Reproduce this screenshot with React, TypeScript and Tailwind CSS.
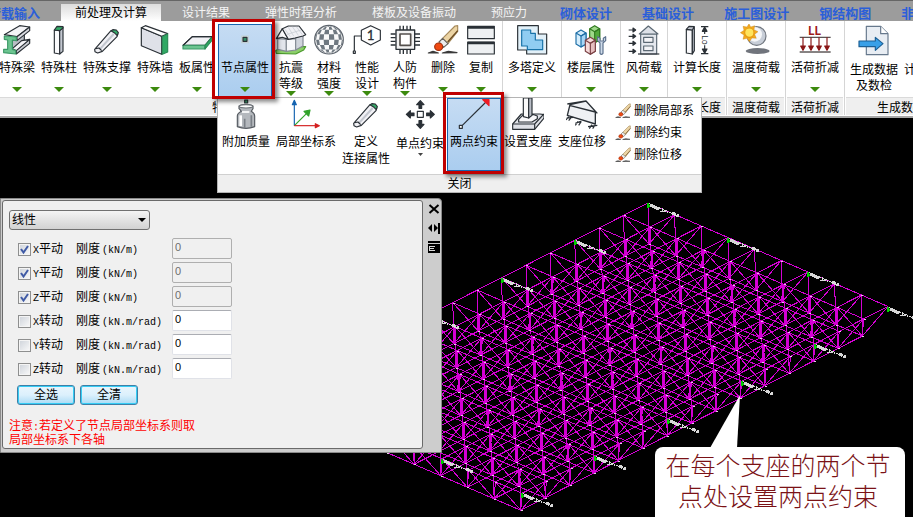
import { useState, type ComponentType, type ReactNode } from "react";

const MAGENTA = "#d400d4";
const INK = "#2a3036";

type IconProps = { className?: string };

function Icon({ children, className = "h-8 w-8" }: IconProps & { children: ReactNode }) {
  return (
    <svg
      viewBox="0 0 96 96"
      className={`shrink-0 ${className}`}
      fill="none"
      stroke={INK}
      strokeWidth="3.5"
      strokeLinejoin="round"
      aria-hidden="true"
    >
      {children}
    </svg>
  );
}

const BeamIcon = () => (
  <Icon>
    <path d="M34 50 70 26V48L34 76Z" fill="#b9bdc4" />
    <path d="M46 78 86 46V58L46 90Z" fill="#c9ccd2" />
    <path d="M34 74 62 50 86 46 46 80Z" fill="#f4f4f7" />
    <path d="M10 32 56 5 86 9 48 38Z" fill="#f4f4f7" />
    <path d="M48 38 86 9V20L48 50Z" fill="#dadce2" />
    <path d="M10 36 46 39V50L34 48V76L44 79V90L8 86V76L20 76V48L10 46Z" fill="#6cc490" stroke="#3d9a68" />
  </Icon>
);

const ColumnIcon = () => (
  <Icon>
    <path d="M34 18 50 20V90L34 87Z" fill="#fafafc" />
    <path d="M50 20 60 10V82L50 90Z" fill="#c3c7d0" />
    <path d="M34 18 42 7 60 8V12L50 20Z" fill="#35ad68" />
  </Icon>
);

const BraceIcon = () => (
  <Icon>
    <path d="M11 76 58 22 66 18 80 30 78 38 34 82 20 87 12 83Z" fill="#f1f1f5" />
    <path d="M26 76 68 30" stroke="#c3c7cf" strokeWidth="6" />
    <path d="M60 20 66 17 76 18 82 26 79 35 72 28Z" fill="#35ad68" />
    <path d="M14 74 24 72 32 80" />
  </Icon>
);

const WallIcon = () => (
  <Icon>
    <path d="M7 11 68 37V91L7 65Z" fill="#dfe1e8" />
    <path d="M7 11 19 5 86 29 68 37Z" fill="#fff" />
    <path d="M70 38 86 30V84L70 91Z" fill="#2fa863" stroke="#2a8a55" />
  </Icon>
);

const SlabIcon = () => (
  <Icon>
    <path d="M6 64 34 38H94L72 64Z" fill="#f1f1f5" />
    <path d="M6 64H72V75H6Z" fill="#6cc490" stroke="#3d9a68" />
    <path d="M72 64 94 38V48L72 75Z" fill="#2fa863" stroke="#2a8a55" />
    <path d="M6 64 34 38H94" />
  </Icon>
);

const NodeIcon = () => (
  <Icon>
    <rect x="38" y="36" width="20" height="20" fill="#e8f1ee" stroke="#c2d0d6" />
    <rect x="42" y="40" width="12" height="12" fill="#37906a" />
  </Icon>
);

const HouseIcon = () => (
  <Icon>
    <path d="M2 80 20 68H92L86 78 62 90 4 88Z" fill="#8ccf6a" stroke="#4b9a2c" />
    <path d="M8 44V76L34 82V46Z" fill="#e3e5ec" stroke="#858b95" />
    <path d="M34 46V82L62 78V44Z" fill="#f8f8fb" stroke="#858b95" />
    <path d="M62 42V78L84 66V32Z" fill="#d0d4dc" stroke="#858b95" />
    <path d="M4 44 22 14 40 46 22 40Z" fill="#fafafc" />
    <path d="M22 14 40 6H72L92 32 84 36 60 42 40 46Z" fill="#f1f1f5" />
    <path d="M30 16 46 38M40 10 56 36M52 8 70 34M64 8 82 32M34 32 78 18" stroke="#c3c8d0" strokeWidth="2" />
  </Icon>
);

// alternate cells of a latitude / longitude grid, seen from the side
const sphereCells = (() => {
  const n = 8;
  const cells: string[] = [];
  const at = (a: number, b: number) => {
    const lat = -Math.PI / 2 + (a * Math.PI) / n;
    const lon = -Math.PI / 2 + (b * Math.PI) / n;
    return `${(48 + 42 * Math.cos(lat) * Math.sin(lon)).toFixed(1)},${(47 + 42 * Math.sin(lat)).toFixed(1)}`;
  };
  for (let a = 0; a < n; a++)
    for (let b = 0; b < n; b++)
      if ((a + b) % 2) cells.push([at(a, b), at(a, b + 1), at(a + 1, b + 1), at(a + 1, b)].join(" "));
  return cells;
})();

const SphereIcon = () => (
  <Icon>
    <circle cx="48" cy="47" r="43" fill="#fafafa" stroke="#5d646c" />
    {sphereCells.map((c) => (
      <polygon key={c} points={c} fill="#6f7880" stroke="none" />
    ))}
  </Icon>
);

const HexIcon = () => (
  <Icon>
    <path d="M10 81V36H31" />
    <rect x="7" y="81" width="6" height="7" fill="#fff" />
    <path d="M59 5 88 19V48L59 63 31 48V19Z" fill="#fff" />
    <text x="59" y="48" textAnchor="middle" fontSize="40" fontFamily="Lato, sans-serif" fill={INK} stroke={INK} strokeWidth="1">
      1
    </text>
  </Icon>
);

const ChipIcon = () => (
  <Icon>
    <path d="M33 5V18M43 5V18M54 5V18M64 5V18M33 76V90M43 76V90M54 76V90M64 76V90M5 30H20M5 41H20M5 52H20M5 63H20M78 30H93M78 41H93M78 52H93M78 63H93" strokeWidth="4" />
    <rect x="21" y="18" width="56" height="58" fill="#f3f3f3" strokeWidth="4" />
    <rect x="33" y="30" width="32" height="34" fill="#fff" stroke="#54504d" strokeWidth="5" />
  </Icon>
);

const BrushIcon = ({ className }: IconProps) => (
  <Icon className={className}>
    <path d="M4 87 18 82 34 87Z M46 87 64 82 90 86Z" fill="#3a3a3a" stroke="#3a3a3a" />
    <path d="M46 44 84 6 92 5V22L62 60Z" fill="#ecd4a4" stroke="#a68a5c" />
    <path d="M62 54 92 20" stroke="#6a4a20" strokeWidth="4" />
    <path d="M36 54 47 43 63 59 50 70Z" fill="#ececec" stroke="#66625c" />
    <ellipse cx="35" cy="68" rx="12" ry="11" fill="#f04a12" stroke="#a5300c" />
  </Icon>
);

const CopyIcon = () => (
  <Icon>
    <rect x="8" y="7" width="80" height="37" fill="#eef0f2" />
    <rect x="8" y="54" width="80" height="36" fill="#eef0f2" />
    <path d="M8 10H88M8 57H88" strokeWidth="8" />
  </Icon>
);

const TowerIcon = () => (
  <Icon>
    <path d="M5 5H67V30H92V90H32V78H5Z" fill="#e2f0f8" />
    <path d="M17 18H44V28H58V48H80V77H34V66H17Z" fill="#90cdf2" stroke="#1772a8" />
  </Icon>
);

function Prism({ x, y, light, dark, edge }: { x: number; y: number; light: string; dark: string; edge: string }) {
  return (
    <g transform={`translate(${x} ${y})`} stroke={edge}>
      <path d="M0 9 15 0 30 9V42L15 51 0 42Z" fill={light} />
      <path d="M15 18 30 9V42L15 51Z" fill={dark} />
      <path d="M0 9 15 18 30 9" />
    </g>
  );
}

const FloorsIcon = () => (
  <Icon>
    <Prism x={44} y={5} light="#9fd98a" dark="#52a83b" edge="#2f7a1f" />
    <Prism x={3} y={18} light="#d5edfc" dark="#a5d5f6" edge="#1d6ea6" />
    <Prism x={31} y={40} light="#f5dada" dark="#e6bfc0" edge="#7a4145" />
    <path d="M68 38V50L75 57V88Q79 94 84 88V57L92 50V38L85 43V51H75V43Z" fill="#cfdbea" stroke="#5a6f8b" />
  </Icon>
);

const WindIcon = () => (
  <Icon>
    {[18, 37, 58, 82].map((y) => (
      <path key={y} d={`M2 ${y}H18M15 ${y - 6} 23 ${y} 15 ${y + 6}Z`} fill={INK} />
    ))}
    <path d="M38 30H86V90H38Z" fill="#e5e8ee" stroke="#5b6873" />
    <path d="M34 30 61 6 90 30Z" fill="#dde1e8" stroke="#5b6873" />
    <path d="M47 40H75V55H47ZM47 66H75V80H47Z" fill="#f4f4f7" stroke="#5b6873" />
    <path d="M30 90H94" />
  </Icon>
);

const LengthIcon = () => (
  <Icon>
    <path d="M16 16 34 18V90L16 87Z" fill="#fafafc" />
    <path d="M16 16 24 7 40 8 34 18ZM34 18 40 8V80L34 90Z" fill="#c3c7d0" />
    <path d="M60 8H82M60 89H82M71 12V30M71 64V86" />
    <path d="M71 9 78 22H64ZM71 88 78 75H64Z" fill={INK} />
    <text transform="translate(64 34) rotate(90)" fontSize="24" fontFamily="Inter, sans-serif" fill={INK} stroke="none">
      Lo
    </text>
  </Icon>
);

const TempIcon = () => (
  <Icon>
    <ellipse cx="53" cy="81" rx="36" ry="9" fill="#70747c" stroke="none" />
    <circle cx="50" cy="36" r="28" fill="#c8ced8" stroke="#70767f" />
    <circle cx="44" cy="31" r="22" fill="#f5f6f8" stroke="none" />
    <path d="M27 -1 32 9 44 5 42 17 54 23 44 31 49 43 36 42 28 53 21 43 9 46 12 33 1 26 12 19 9 7 21 9Z" fill="#f4a91f" stroke="#b7780c" strokeWidth="1" />
    <circle cx="28" cy="26" r="14" fill="#ffe45c" stroke="#e59a12" />
  </Icon>
);

const LiveLoadIcon = () => (
  <Icon>
    <text x="47" y="33" textAnchor="middle" fontSize="34" fontWeight="bold" fontFamily="Inter, sans-serif" fill="#9e1b1b" stroke="none">
      LL
    </text>
    <path d="M2 40H95" stroke="#4b4444" />
    {[12, 36, 60, 84].map((x) => (
      <path key={x} d={`M${x} 40V68M${x - 7} 66 ${x} 79 ${x + 7} 66Z`} fill="#8a1717" stroke="#8a1717" />
    ))}
    <path d="M2 84H95" stroke="#4b4444" strokeWidth="4" />
  </Icon>
);

const DataIcon = () => (
  <Icon>
    <path d="M25 7H68L90 29V92H25Z" fill="#e8edf3" stroke="#66788c" />
    <path d="M68 7V29H90" fill="#fff" stroke="#66788c" />
    <path d="M3 51H52V40L75 59 52 79V68H3Z" fill="#39a0e8" stroke="#1c5f94" />
  </Icon>
);

const WeightIcon = () => (
  <Icon>
    <rect x="44" y="6" width="9" height="9" fill="#3aa06c" />
    <path d="M27 24Q48 16 69 24V32Q66 36 64 40Q74 46 74 54V86Q48 96 22 86V54Q22 46 34 40Q31 36 27 32Z" fill="#b4b8bd" stroke="#565b61" />
    <path d="M32 52V84" stroke="#fff" strokeWidth="8" />
    <path d="M44 62V90M64 52V86" stroke="#7b8087" strokeWidth="5" />
    <ellipse cx="48" cy="25" rx="20" ry="5" fill="#fff" stroke="#71767c" />
    <path d="M36 42H58" stroke="#fff" strokeWidth="5" />
  </Icon>
);

const AxesIcon = () => (
  <Icon>
    <path d="M13 83V14" stroke="#1463b0" />
    <path d="M13 7 19 20H7Z" fill="#1463b0" stroke="#1463b0" />
    <path d="M13 83 50 46" stroke="#31a329" />
    <path d="M60 36 56 54 42 40Z" fill="#31a329" stroke="#31a329" />
    <path d="M13 83H78" stroke="#d42020" />
    <path d="M88 83 76 89V77Z" fill="#d42020" stroke="#d42020" />
  </Icon>
);

const SinglePointIcon = () => (
  <Icon>
    <rect x="40" y="40" width="18" height="18" fill="#fff" />
    <path
      d="M49 8 60 20H53V31H45V20H38ZM49 91 60 79H53V68H45V79H38ZM7 49 19 38V45H30V53H19V60ZM91 49 79 38V45H68V53H79V60Z"
      fill={INK}
    />
  </Icon>
);

const TwoPointIcon = () => (
  <Icon>
    <path d="M10 85 84 12" />
    <path d="M74 5H93V23Z" fill="#ee1c24" stroke="#ee1c24" />
    <rect x="4" y="82" width="9" height="9" fill="#fff" />
  </Icon>
);

const FootingIcon = () => (
  <Icon>
    <path d="M2 78 28 48H84L96 50V60L68 94H2Z" fill="#dfe1e7" />
    <path d="M2 78H68L96 48M68 78V94" />
    <path d="M20 64 34 50H66L76 54V62L60 72H20Z" fill="#f8f8fa" />
    <path d="M34 0V56L50 60V0Z" fill="#fafafa" />
    <path d="M50 0V60L60 52V0Z" fill="#b9bdc6" />
  </Icon>
);

const DisplaceIcon = () => (
  <Icon>
    <path d="M9 20 58 9 92 46 86 76 4 54Z" fill="#eff1f4" stroke="none" />
    <path d="M12 20 60 9 88 40V78L4 52 12 20M4 18 60 9 94 46M10 22 88 42" strokeWidth="4" />
    <path d="M2 60 22 58M0 66 8 56M8 68 16 58M28 76 44 70M28 82 36 70M38 82 46 70M66 86 94 82M70 92 78 80M80 92 88 80" />
  </Icon>
);

function Arrow() {
  return (
    <svg viewBox="0 0 10 5" className="block h-[5px] w-2.5" aria-hidden="true">
      <path d="M0 0H10L5 5Z" fill="#3c8a0e" />
    </svg>
  );
}

type Tool = {
  lines: string[];
  icon: ComponentType<IconProps>;
  wide?: boolean;
  narrow?: boolean;
  noArrow?: boolean;
};

function ToolButton({ tool }: { tool: Tool }) {
  const Glyph = tool.icon;
  const width = tool.wide ? "w-[54px]" : tool.narrow ? "w-[38px]" : "w-[42px]";
  const double = tool.lines.length > 1;
  return (
    <button
      type="button"
      className={`flex h-[76px] shrink-0 flex-col items-center pt-[3px] ${width} ${double ? "" : "pb-[5px]"}`}
    >
      <Glyph />
      <span className={`mt-1 whitespace-nowrap ${tool.noArrow ? "pt-0.5" : ""}`}>
        {tool.lines.map((l) => (
          <span key={l} className="block">
            {l}
          </span>
        ))}
      </span>
      {!tool.noArrow && (
        <span className={double ? "-mt-px" : "mt-auto"}>
          <Arrow />
        </span>
      )}
    </button>
  );
}

function Group({ label, children }: { label: string; children: ReactNode }) {
  return (
    <div className="shrink-0 border-r border-[#d5d5d5]">
      <div className="flex px-0.5">{children}</div>
      <div className="mx-px h-[18px] border-t border-[#dadada] bg-[#efefef] text-center leading-[20px]">{label}</div>
    </div>
  );
}

const beforeNode: Tool[] = [
  { lines: ["特殊梁"], icon: BeamIcon },
  { lines: ["特殊柱"], icon: ColumnIcon },
  { lines: ["特殊支撑"], icon: BraceIcon, wide: true },
  { lines: ["特殊墙"], icon: WallIcon },
  { lines: ["板属性"], icon: SlabIcon },
];

const afterNode: Tool[] = [
  { lines: ["抗震", "等级"], icon: HouseIcon, narrow: true },
  { lines: ["材料", "强度"], icon: SphereIcon, narrow: true },
  { lines: ["性能", "设计"], icon: HexIcon, narrow: true },
  { lines: ["人防", "构件"], icon: ChipIcon, narrow: true },
  { lines: ["删除"], icon: BrushIcon, narrow: true },
  { lines: ["复制"], icon: CopyIcon, narrow: true },
];

const singles: Tool[] = [
  { lines: ["多塔定义"], icon: TowerIcon, wide: true },
  { lines: ["楼层属性"], icon: FloorsIcon, wide: true },
  { lines: ["风荷载"], icon: WindIcon },
  { lines: ["计算长度"], icon: LengthIcon, wide: true },
  { lines: ["温度荷载"], icon: TempIcon, wide: true },
  { lines: ["活荷折减"], icon: LiveLoadIcon, wide: true },
];

const nodeTools: { lines: string[]; icon: ComponentType<IconProps>; width: string; more?: boolean; active?: boolean }[] = [
  { lines: ["附加质量"], icon: WeightIcon, width: "w-[54px]" },
  { lines: ["局部坐标系"], icon: AxesIcon, width: "w-[66px]" },
  { lines: ["定义", "连接属性"], icon: BraceIcon, width: "w-[54px]" },
  { lines: ["单点约束"], icon: SinglePointIcon, width: "w-[54px]", more: true },
  { lines: ["两点约束"], icon: TwoPointIcon, width: "w-[54px]", active: true },
  { lines: ["设置支座"], icon: FootingIcon, width: "w-[54px]" },
  { lines: ["支座位移"], icon: DisplaceIcon, width: "w-[54px]" },
];

function NodeMenu() {
  return (
    <div className="absolute -left-px top-[76px] z-20 w-[485px] border border-[#b4b4b4] bg-white">
      <div className="flex h-[76px] pl-px">
        {nodeTools.map(({ icon: Glyph, ...t }) => (
          <div key={t.lines[0]} className={`relative shrink-0 ${t.width}`}>
            <button
              type="button"
              className={`flex w-full flex-col items-center whitespace-nowrap leading-[17px] ${
                t.active ? "h-[73px] bg-gradient-to-b from-[#c6dcf3] to-[#aacdef] outline -outline-offset-1 outline-[#1763ae]" : ""
              }`}
            >
              <Glyph />
              <span className={t.more ? "mt-1.5" : "mt-1"}>
                {t.lines.map((l) => (
                  <span key={l} className="block">
                    {l}
                  </span>
                ))}
              </span>
              {t.more && (
                <svg viewBox="0 0 5 3" className="h-[3px] w-[5px]" aria-hidden="true">
                  <path d="M0 0H5L2.5 3Z" fill="#444" />
                </svg>
              )}
            </button>
            {t.active && (
              <span className="pointer-events-none absolute -left-1 -right-[3px] -top-1.5 bottom-0 z-30 border-[3px] border-[#c00000] shadow-[3px_3px_4px_rgba(0,0,0,0.45)]" />
            )}
          </div>
        ))}
        <div className="ml-1.5 pt-0.5">
          {["删除局部系", "删除约束", "删除位移"].map((l) => (
            <button key={l} type="button" className="flex h-[22px] items-center gap-[3px] whitespace-nowrap">
              <BrushIcon className="h-4 w-4" />
              {l}
            </button>
          ))}
        </div>
      </div>
      <div className="h-[18px] border-t border-[#d0d0d0] bg-[#efefef] text-center leading-[18px]">关闭</div>
    </div>
  );
}

const leftTabs = ["荷载输入", "前处理及计算", "设计结果", "弹性时程分析", "楼板及设备振动", "预应力"];
const rightTabs = ["砌体设计", "基础设计", "施工图设计", "钢结构图", "非线性"];

function Tabs() {
  return (
    <nav className="-ml-[26px] flex h-[21px] items-end gap-[5px] text-[12px] leading-[17px]">
      <div className="flex shrink-0 gap-[7px]">
        {leftTabs.map((t, i) => (
          <a
            key={t}
            href="#"
            className={`h-[17px] whitespace-nowrap px-3.5 pt-px ${
              i === 0
                ? "text-[13px] font-bold text-[#2b5fd9]"
                : i === 1
                  ? "bg-gradient-to-b from-[#dcdcdc] to-white text-black"
                  : "text-[#f4f4f4]"
            }`}
          >
            {t}
          </a>
        ))}
      </div>
      <div className="flex shrink-0 gap-0.5">
        {rightTabs.map((t) => (
          <a key={t} href="#" className="h-[17px] whitespace-nowrap px-3.5 pt-px text-[13px] font-bold text-[#2b5fd9]">
            {t}
          </a>
        ))}
      </div>
    </nav>
  );
}

function Ribbon() {
  return (
    <header className="relative border-b-2 border-[#a8a8a8] bg-white text-[12px] leading-[16px] text-black">
      <div className="bg-[#9c9c9c] shadow-[inset_0_1px_0_#666]">
        <Tabs />
      </div>
      <div className="-ml-1.5 flex pb-px">
        <Group label="特殊构件定义">
          {beforeNode.map((t) => (
            <ToolButton key={t.lines[0]} tool={t} />
          ))}
          <div className="relative w-[54px] shrink-0">
            <button
              type="button"
              className="mt-[3px] flex h-[73px] w-full flex-col items-center bg-gradient-to-b from-[#c6dcf3] to-[#aacdef] pb-[5px] outline -outline-offset-1 outline-[#1763ae]"
            >
              <NodeIcon />
              <span className="mt-1">节点属性</span>
              <span className="mt-auto">
                <Arrow />
              </span>
            </button>
            <span className="pointer-events-none absolute -bottom-0.5 -left-1.5 -right-[3px] -top-0.5 z-30 border-[3px] border-[#c00000] shadow-[3px_3px_4px_rgba(0,0,0,0.45)]" />
            <NodeMenu />
          </div>
          {afterNode.map((t) => (
            <ToolButton key={t.lines[0]} tool={t} />
          ))}
        </Group>
        {singles.map((t) => (
          <Group key={t.lines[0]} label={t.lines[0]}>
            <ToolButton tool={t} />
          </Group>
        ))}
        <Group label="生成数据">
          <ToolButton tool={{ lines: ["生成数据", "及数检"], icon: DataIcon, wide: true, noArrow: true }} />
          <ToolButton tool={{ lines: ["计算参数"], icon: CopyIcon, wide: true, noArrow: true }} />
        </Group>
      </div>
    </header>
  );
}

// Space frame: the upper grid has 10 x 16 nodes, the lower one a node under each cell
const upper = (i: number, j: number) => [648 + 26.67 * i - 24.4 * j, 203 + 11.5 * i + 12.45 * j];
const lower = (i: number, j: number) => {
  const [x, y] = upper(i, j);
  return [x + 1, y + 41];
};

const frame = (() => {
  const thin: string[] = [];
  const thick: string[] = [];
  const nodes: number[][] = [];
  const line = (a: number[], b: number[], to = thin) =>
    to.push(`M${a[0].toFixed(1)} ${a[1].toFixed(1)}L${b[0].toFixed(1)} ${b[1].toFixed(1)}`);
  for (let i = 0; i <= 9; i++)
    for (let j = 0; j <= 15; j++) {
      nodes.push(upper(i, j));
      if (i < 9) line(upper(i, j), upper(i + 1, j));
      if (j < 15) line(upper(i, j), upper(i, j + 1));
      if (i < 9 && j < 15) {
        const l = lower(i, j);
        nodes.push(l);
        line(l, upper(i, j));
        line(l, upper(i + 1, j));
        line(l, upper(i, j + 1));
        line(l, upper(i + 1, j + 1), i < 8 && j < 14 ? thick : thin);
        if (i < 8) line(l, lower(i + 1, j));
        if (j < 14) line(l, lower(i, j + 1));
      }
    }
  return { thin: thin.join(""), thick: thick.join(""), nodes };
})();

const supports = [
  [0, 0], [3, 0], [6, 0], [9, 0], [0, 3], [0, 6], [0, 9],
  [9, 3], [9, 6], [9, 9], [9, 12], [9, 15], [6, 15],
].map(([i, j]) => upper(i, j));

function Model() {
  return (
    <svg
      viewBox="0 0 913 517"
      preserveAspectRatio="xMidYMid slice"
      shapeRendering="crispEdges"
      className="absolute inset-0 h-full w-full"
      aria-hidden="true"
    >
      <path d={frame.thin} fill="none" stroke={MAGENTA} strokeWidth="1" />
      <path d={frame.thick} fill="none" stroke={MAGENTA} strokeWidth="2.5" />
      {frame.nodes.map(([x, y]) => (
        <rect key={`${x},${y}`} x={Math.round(x)} y={Math.round(y)} width="2" height="1" fill="#e8c8e8" />
      ))}
      {supports.map(([x, y]) => (
        <g key={`${x},${y}`} transform={`translate(${Math.round(x)} ${Math.round(y)})`} fill="none" stroke="#d8d8d8">
          <path d="M0 0V5M-1 3H2" stroke="#00d000" strokeWidth="1.5" />
          <path d="M2 2 11 6" strokeWidth="3" />
          <path d="M11 5 20 9" strokeWidth="2" strokeDasharray="2 1" />
          <path d="M12 8 18 9M21 9 25 11" />
          <path d="M24 10 31 13" strokeWidth="3" strokeDasharray="4 1" />
        </g>
      ))}
    </svg>
  );
}

const rows = [
  { axis: "X", kind: "平动", unit: "(kN/m)" },
  { axis: "Y", kind: "平动", unit: "(kN/m)" },
  { axis: "Z", kind: "平动", unit: "(kN/m)" },
  { axis: "X", kind: "转动", unit: "(kN.m/rad)" },
  { axis: "Y", kind: "转动", unit: "(kN.m/rad)" },
  { axis: "Z", kind: "转动", unit: "(kN.m/rad)" },
];

function ConstraintPanel() {
  const [locked, setLocked] = useState([true, true, true, false, false, false]);

  const toggle = (n: number) => setLocked(locked.map((v, i) => (i === n ? !v : v)));

  const buttonClass =
    "h-5 w-[58px] rounded-[3px] border border-[#3f7fa6] bg-gradient-to-b from-[#eaf6fd] via-[#dcf0fc] to-[#a9dbf5] leading-[16px] shadow-[inset_0_0_0_1px_#35cdf5]";

  return (
    <aside className="relative flex w-[442px] max-w-full rounded-tr-sm border border-[#8a8a8a] bg-[#cdcdcd] text-[12px] leading-[16px] text-black">
      <div className="mb-[3px] ml-px mt-px flex-1 rounded-[3px] border border-[#6a6a6a] bg-[#f0f0f0] pb-0.5 pl-1.5 pt-[9px]">
        <div className="relative w-[141px]">
          <select
            aria-label="类型"
            className="block h-5 w-full appearance-none rounded-[3px] border border-[#707070] bg-gradient-to-b from-[#f4f4f4] to-[#d2d2d2] pl-0.5 leading-[18px]"
          >
            <option>线性</option>
            <option>非线性</option>
          </select>
          <svg viewBox="0 0 8 4" className="pointer-events-none absolute right-1 top-2 h-1 w-2" aria-hidden="true">
            <path d="M0 0H8L4 4Z" fill="#000" />
          </svg>
        </div>

        <div className="mt-[7px] pl-[9px]">
          {rows.map((r, n) => (
            <div key={r.axis + r.kind} className="flex h-6 items-center">
              <label className="flex w-[58px] items-center gap-0.5">
                <span className="relative h-[13px] w-[13px]">
                  <input
                    type="checkbox"
                    checked={locked[n]}
                    onChange={() => toggle(n)}
                    className="block h-[13px] w-[13px] appearance-none border border-[#8e8f8f] bg-gradient-to-br from-[#cdd2d9] to-[#fafafa] shadow-[inset_0_0_0_1px_#f4f4f4]"
                  />
                  {locked[n] && (
                    <svg viewBox="0 0 13 13" className="pointer-events-none absolute inset-0" aria-hidden="true">
                      <path d="M3 6 5.5 9.5 10 3" fill="none" stroke="#3f5aa5" strokeWidth="2" />
                    </svg>
                  )}
                </span>
                <span className="whitespace-nowrap pt-0.5">
                  <span className="font-['Liberation_Mono'] text-[10px]">{r.axis}</span>
                  {r.kind}
                </span>
              </label>
              <label htmlFor={`stiff-${n}`} className="w-24 whitespace-nowrap pt-0.5">
                刚度<span className="ml-0.5 font-['Liberation_Mono'] text-[10px]">{r.unit}</span>
              </label>
              <input
                id={`stiff-${n}`}
                defaultValue="0"
                disabled={locked[n]}
                className="mb-px h-[21px] w-[60px] rounded-[2px] border border-[#e0e2e8] border-t-[#abadb3] bg-white pb-1 pl-0.5 font-['Liberation_Sans'] text-[11px] disabled:border-[#afafaf] disabled:bg-[#f0f0f0] disabled:text-[#6d6d6d]"
              />
            </div>
          ))}
          <div className="-ml-px mt-1 flex gap-[5px]">
            <button type="button" className={buttonClass} onClick={() => setLocked(rows.map(() => true))}>
              全选
            </button>
            <button type="button" className={buttonClass} onClick={() => setLocked(rows.map(() => false))}>
              全清
            </button>
          </div>
        </div>

        <p className="mt-[15px] leading-[12px] text-[#ff0000]">
          注意<span className="font-['Liberation_Mono'] text-[10px]">:</span>若定义了节点局部坐标系则取
          <br />
          局部坐标系下各轴
        </p>
      </div>

      <div className="flex w-[18px] flex-col items-center gap-[7px] pl-1 pt-1">
        <button type="button" aria-label="关闭" className="h-3 w-3">
          <svg viewBox="0 0 12 12" stroke="#000" strokeWidth="2" fill="none">
            <path d="M1.5 2 10.5 10M10.5 2 1.5 10" />
          </svg>
        </button>
        <button type="button" aria-label="自动隐藏" className="h-3 w-3">
          <svg viewBox="0 0 12 12">
            <path d="M4 2V10L0 6ZM6 2V10L10 6ZM10 1H12V12H10Z" />
          </svg>
        </button>
        <button type="button" aria-label="特性" className="h-3 w-3">
          <svg viewBox="0 0 12 12" shapeRendering="crispEdges">
            <path d="M0 0H12V2H0ZM0 3H12V12H0Z" />
            <path d="M2 5H7V6H2ZM2 7H6V8H2ZM2 9H7V10H2ZM1 5H2V10H1Z" fill="#d8d8d8" />
          </svg>
        </button>
      </div>
    </aside>
  );
}

function Callout() {
  return (
    <div className="absolute bottom-0 right-2 w-[250px]">
      <svg viewBox="0 0 250 54" className="block w-full" aria-hidden="true">
        <path d="M85 1 55 54H82Z" fill="#fff" />
      </svg>
      <p className="-mt-px rounded-t-lg bg-white pb-1 pl-2.5 pr-3.5 pt-1 text-center text-[25px] font-light leading-[31px] text-[#7b1216]">
        在每个支座的两个节点处设置两点约束
      </p>
    </div>
  );
}

export default function App() {
  return (
    <div className="relative flex min-h-screen flex-col overflow-hidden bg-black font-['Liberation_Sans','Noto_Sans_CJK_SC',sans-serif]">
      <Model />
      <div className="relative z-10">
        <Ribbon />
      </div>
      <main className="flex-1 pt-20">
        <ConstraintPanel />
        <Callout />
      </main>
    </div>
  );
}
